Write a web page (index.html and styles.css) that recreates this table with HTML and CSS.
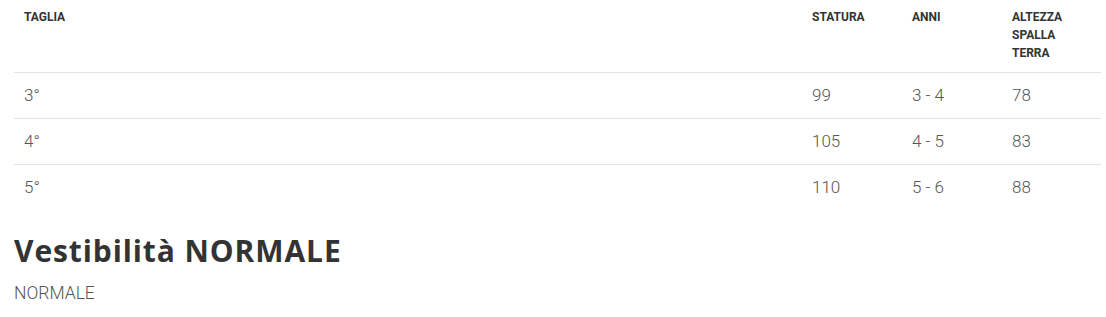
FILE: index.html
```html
<!DOCTYPE html>
<html lang="it">
<head>
    <meta charset="UTF-8">
    <meta name="viewport" content="width=device-width, initial-scale=1.0">
    <title>Tabella taglie</title>
    <link rel="stylesheet" href="styles.css">
</head>
<body>
    <div class="container">
        <table class="size-table">
            <thead>
                <tr>
                    <th class="col-size">TAGLIA</th>
                    <th class="col-num">STATURA</th>
                    <th class="col-num">ANNI</th>
                    <th class="col-last">ALTEZZA SPALLA TERRA</th>
                </tr>
            </thead>
            <tbody>
                <tr>
                    <td>3°</td>
                    <td>99</td>
                    <td>3 - 4</td>
                    <td>78</td>
                </tr>
                <tr>
                    <td>4°</td>
                    <td>105</td>
                    <td>4 - 5</td>
                    <td>83</td>
                </tr>
                <tr>
                    <td>5°</td>
                    <td>110</td>
                    <td>5 - 6</td>
                    <td>88</td>
                </tr>
            </tbody>
        </table>

        <h2 class="fit-title">Vestibilità NORMALE</h2>
        <p class="fit-text">NORMALE</p>
    </div>
</body>
</html>
```

FILE: styles.css
```css
body {
    margin: 0;
    font-family: Roboto, "Liberation Sans", sans-serif;
    color: #555;
    background: #fff;
}
.container {
    padding: 0 5px 0 14px;
}
.size-table {
    width: 100%;
    border-collapse: collapse;
}
.size-table th {
    font-size: 12px;
    font-weight: 700;
    line-height: 18px;
    color: #333;
    text-align: left;
    vertical-align: top;
    padding: 8px 10px 10px;
    border-bottom: 1px solid #e2e2e2;
}
.col-num {
    width: 80px;
}
.col-last {
    width: 79px;
}
.size-table td {
    font-size: 17px;
    font-weight: 300;
    line-height: 25px;
    padding: 10px 10px;
    border-bottom: 1px solid #e2e2e2;
}
.size-table tbody tr:last-child td {
    border-bottom: none;
}
.fit-title {
    font-family: "Open Sans", sans-serif;
    font-size: 30px;
    font-weight: 700;
    letter-spacing: 0.9px;
    color: #333;
    margin: 23px 0 14px;
    line-height: 1.2;
}
.fit-text {
    font-size: 17.5px;
    font-weight: 300;
    margin: 0;
}
```
